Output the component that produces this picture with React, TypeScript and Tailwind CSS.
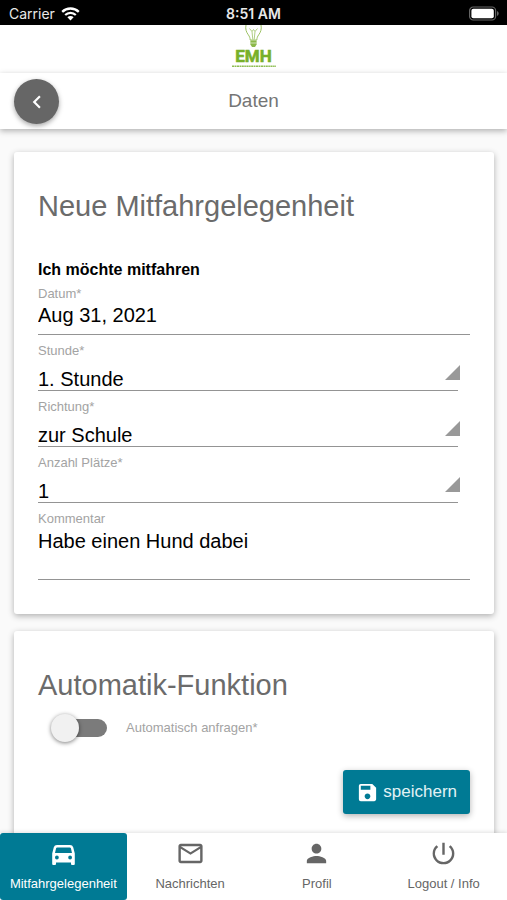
import type { ReactNode } from "react";
import { MdChevronLeft, MdMailOutline, MdPerson, MdPowerSettingsNew, MdSave } from "react-icons/md";

function StatusBar() {
  return (
    <div className="grid h-[25px] shrink-0 grid-cols-3 items-center bg-black px-2 pt-0.5 font-['Inter',sans-serif] text-sm text-[#e8e8e8]">
      <div className="flex items-center gap-1.5 pl-px">
        <span>Carrier</span>
        <svg width="19" height="14" viewBox="0 0 19 14" fill="none" aria-hidden="true">
          <path d="M1.2 4.9a11.8 11.8 0 0 1 16.6 0" stroke="#fff" strokeWidth="2.3" />
          <path d="M4.2 8a7.5 7.5 0 0 1 10.6 0" stroke="#fff" strokeWidth="2.2" />
          <path d="M6.4 10.3a4.4 4.4 0 0 1 6.2 0L9.5 13.6z" fill="#fff" />
        </svg>
      </div>
      <span className="text-center font-semibold">8:51 AM</span>
      <svg className="justify-self-end" width="30" height="15" viewBox="0 0 30 15" aria-hidden="true">
        <rect x="0.6" y="1" width="26" height="13" rx="3.6" fill="none" stroke="#666" strokeWidth="1.2" />
        <rect x="2.4" y="2.8" width="22.4" height="9.4" rx="2" fill="#fff" />
        <path d="M28 5v5c1-.4 1.7-1.3 1.7-2.5S29 5.4 28 5z" fill="#666" />
      </svg>
    </div>
  );
}

function Logo() {
  return (
    <svg width="46" height="44" viewBox="0 0 46 44" role="img" aria-label="EMH">
      <g fill="none" stroke="#9cc263" strokeWidth="1">
        <path d="M15 0c-.8 4 .2 7 2.3 9.8 1.3 1.8 1.7 3 1.9 5.200h6.600c.2-2.200.6-3.400 1.900-5.200C29.800 7 30.800 4 30 0" />
        <path d="M18.500 3.500l2.500 3 1.500-2 1.500 2 2.500-3M21 6.500l.8 8M24 6.500l-.8 8" strokeWidth="0.8" />
      </g>
      <path d="M19.400 15.500h6.200v4l-1.600 2.500h-3l-1.600-2.500z" fill="#8cb84a" />
      <path d="M19.400 18h6.200" stroke="#fff" strokeWidth="0.6" />
      <text
        x="22.500"
        y="37"
        textAnchor="middle"
        fontFamily="Roboto, sans-serif"
        fontWeight="700"
        fontSize="17"
        fill="#78b02a"
        stroke="#78b02a"
        strokeWidth="0.6"
      >
        EMH
      </text>
      <path d="M1 41.200h44" stroke="#8fbe55" strokeWidth="1.600" strokeDasharray="2.200 0.500 1.600 0.500" />
    </svg>
  );
}

function CarIcon({ size }: { size: number }) {
  return (
    <svg width={size} height={size} viewBox="0 0 29 29" fill="currentColor" fillRule="evenodd" aria-hidden="true">
      <path d="M8 6h13q2.500 0 3.200 2.200l1.600 6.300V25q0 1-1 1h-1.800q-1 0-1-1v-1.600H7V25q0 1-1 1H4.200q-1 0-1-1V14.500l1.600-6.300Q5.500 6 8 6zM8.300 8.400q-1 0-1.200.9L6 14h17l-1.100-4.700q-.2-.9-1.200-.9zM7.900 16.600a1.900 1.900 0 1 0 0 3.800 1.900 1.900 0 0 0 0-3.800zM21.100 16.600a1.900 1.900 0 1 0 0 3.800 1.900 1.900 0 0 0 0-3.800z" />
    </svg>
  );
}

function Card({ title, children }: { title: string; children: ReactNode }) {
  return (
    <section className="rounded-[3px] bg-white px-6 pt-6 shadow-[0_2px_6px_rgba(0,0,0,0.3)]">
      <h2 className="text-[29px] leading-[60px] text-[#6b6b6b]">{title}</h2>
      {children}
    </section>
  );
}

const labelClass = "block text-[13px] leading-4 text-[#a3a3a3]";

function SelectField({ id, label, options }: { id: string; label: string; options: string[] }) {
  return (
    <div className="pt-2">
      <label htmlFor={id} className={labelClass}>
        {label}
      </label>
      <div className="relative mr-3 pt-1">
        <select
          id={id}
          className="block h-7 w-full appearance-none rounded-none border-b border-[#949494] bg-transparent p-0 pt-1 text-xl leading-6 text-black outline-none"
        >
          {options.map((option) => (
            <option key={option}>{option}</option>
          ))}
        </select>
        <svg
          className="pointer-events-none absolute top-1.5 -right-0.5"
          width="15"
          height="15"
          viewBox="0 0 15 15"
          aria-hidden="true"
        >
          <path d="M15 0v15H0z" fill="#999" />
        </svg>
      </div>
    </div>
  );
}

const tabs = [
  { label: "Mitfahrgelegenheit", Icon: CarIcon, active: true },
  { label: "Nachrichten", Icon: MdMailOutline, active: false },
  { label: "Profil", Icon: MdPerson, active: false },
  { label: "Logout / Info", Icon: MdPowerSettingsNew, active: false },
];

export default function App() {
  return (
    <div className="flex h-screen flex-col bg-[#fafafa] font-['Liberation_Sans',Arial,sans-serif]">
      <StatusBar />
      <div className="flex h-12 shrink-0 justify-center bg-white">
        <Logo />
      </div>
      <header className="relative grid h-14 shrink-0 grid-cols-[1fr_auto_1fr] items-center bg-white px-3.5 pt-px shadow-[0_2px_6px_rgba(0,0,0,0.3)]">
        <button
          type="button"
          aria-label="Zurück"
          className="flex size-[45px] items-center justify-center rounded-full bg-[#666] text-white shadow-[0_2px_5px_rgba(0,0,0,0.35)]"
        >
          <MdChevronLeft size={26} />
        </button>
        <h1 className="text-[19px] text-[#757575]">Daten</h1>
      </header>

      <main className="min-h-0 flex-1 overflow-y-auto pt-[23px] pr-[13px] pl-3.5 [scrollbar-width:none]">
        <form className="flex flex-col gap-[17px]">
          <Card title="Neue Mitfahrgelegenheit">
            <h3 className="pt-[22px] text-base leading-6 font-bold text-black">Ich möchte mitfahren</h3>
            <div className="pt-1">
              <label htmlFor="datum" className={labelClass}>
                Datum*
              </label>
              <input
                id="datum"
                type="text"
                defaultValue="Aug 31, 2021"
                className="block h-[33px] w-full border-b border-[#949494] pb-1.5 text-xl leading-6 text-black outline-none"
              />
            </div>
            <SelectField id="stunde" label="Stunde*" options={["1. Stunde", "2. Stunde", "3. Stunde"]} />
            <SelectField id="richtung" label="Richtung*" options={["zur Schule", "nach Hause"]} />
            <SelectField id="plaetze" label="Anzahl Plätze*" options={["1", "2", "3", "4"]} />
            <div className="pt-2 pb-[34px]">
              <label htmlFor="kommentar" className={labelClass}>
                Kommentar
              </label>
              <textarea
                id="kommentar"
                defaultValue="Habe einen Hund dabei"
                className="block h-[53px] w-full resize-none overflow-hidden border-b border-[#949494] pt-0.5 text-xl leading-6 text-black outline-none"
              />
            </div>
          </Card>

          <Card title="Automatik-Funktion">
            <div className="flex items-center gap-[19px] pl-[18px]">
              <input
                id="anfragen"
                type="checkbox"
                role="switch"
                className="relative my-1 h-[18px] w-[51px] appearance-none rounded-full bg-[#7b7b7b] before:absolute before:-top-[5px] before:-left-[5px] before:size-7 before:rounded-full before:bg-[#f1f1f1] before:shadow-[0_1px_4px_rgba(0,0,0,0.5)] before:content-[''] checked:bg-[#007a94] checked:before:left-7"
              />
              <label htmlFor="anfragen" className={labelClass}>
                Automatisch anfragen*
              </label>
            </div>
            <div className="flex justify-end pt-[29px] pb-8">
              <button
                type="button"
                className="flex h-11 items-center gap-1 rounded-[3px] bg-[#007a94] px-[13px] text-[17px] text-[#e2f2f5] shadow-[0_2px_6px_rgba(0,0,0,0.3)]"
              >
                <MdSave size={23} className="text-white" />
                speichern
              </button>
            </div>
          </Card>
        </form>
      </main>

      <nav className="relative grid h-[67px] shrink-0 grid-cols-4 bg-white shadow-[0_-1px_4px_rgba(0,0,0,0.12)]">
        {tabs.map(({ label, Icon, active }) => (
          <a
            key={label}
            href="#"
            aria-current={active ? "page" : undefined}
            className={
              active
                ? "flex flex-col items-center gap-2 rounded-[3px] bg-[#007a94] pt-1.5 text-[13px] leading-4 whitespace-nowrap text-white"
                : "flex flex-col items-center gap-2 pt-1.5 text-[13px] leading-4 whitespace-nowrap text-[#666]"
            }
          >
            <Icon size={29} />
            {label}
          </a>
        ))}
      </nav>
    </div>
  );
}
